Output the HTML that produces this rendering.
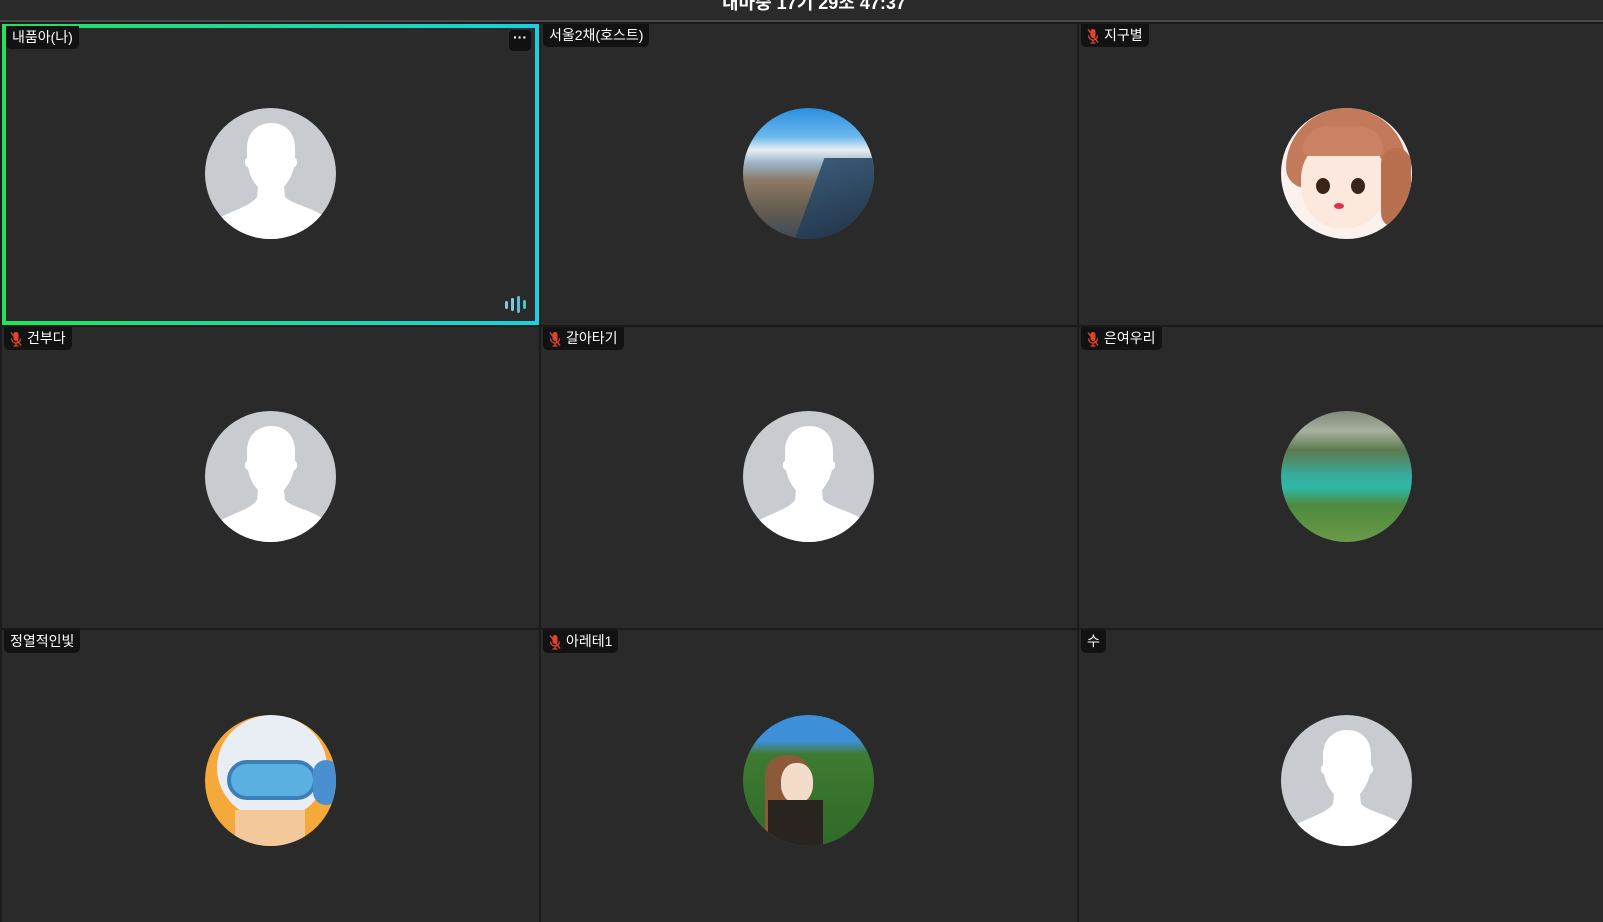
<!DOCTYPE html>
<html><head><meta charset="utf-8"><style>
*{margin:0;padding:0;box-sizing:border-box}
body{width:1603px;height:922px;background:#1b1b1b;overflow:hidden;position:relative;font-family:"Liberation Sans","Noto Sans CJK KR",sans-serif}
.hdr{position:absolute;left:0;top:0;width:1603px;height:22px;background:#2a2a2a;border-bottom:2px solid #4a4a4a;overflow:hidden}
.hdr span{position:absolute;left:722px;top:-11px;color:#fff;font-size:18px;font-weight:bold;white-space:nowrap}
.tile{position:absolute;background:#2a2a2a;overflow:hidden}
.lbl{position:absolute;left:2px;top:0;height:23px;line-height:23px;padding:0 6px 0 6px;background:#121212;color:#fff;font-size:14px;border-radius:0 0 5px 5px;white-space:nowrap;display:flex;align-items:center}
.lbl svg{margin-right:5px}
.av{position:absolute;width:131px;height:131px;border-radius:50%;left:203px;top:86px;overflow:hidden}
</style></head><body>
<div class="hdr"><span>내마중 17기 29조 47:37</span></div>

<svg width="0" height="0" style="position:absolute"><defs>
<symbol id="mic" viewBox="0 0 12 16"><rect x="3.5" y="1" width="5" height="9" rx="2.5" fill="#e0442e"/><path d="M1.5 7.5a4.5 4.5 0 0 0 9 0M6 12v3M3.5 15h5" stroke="#e0442e" stroke-width="1.3" fill="none"/><path d="M1 1.5l10 13" stroke="#e0442e" stroke-width="1.4"/></symbol>
<symbol id="person" viewBox="0 0 131 131"><rect width="131" height="131" fill="#c8cbd0"/><path d="M42 40c0-16 11-25 24-25 14 0 24 9 24 25v10c3 1 3 8-1 9-2 9-6 15-10 20l1 10c8 8 30 11 41 21 6 5 10 13 10 21H1c0-8 5-15 12-20 12-8 32-12 39-22l1-10c-5-5-8-11-10-20-4-1-4-8-1-9z" fill="#fff"/></symbol>
</defs></svg>

<!-- Row 1 -->
<div class="tile" style="left:2px;top:24px;width:537px;height:301px">
  <div class="av" style="left:203px;top:84px"><svg width="131" height="131"><use href="#person"/></svg></div>
  <div style="position:absolute;left:0;top:0;width:537px;height:301px;border:4px solid transparent;border-image:linear-gradient(90deg,#22e35a,#1ccfe0) 1"></div>
  <div class="lbl" style="left:4px;top:2px">내품아(나)</div>
  <div style="position:absolute;left:507px;top:6px;width:22px;height:21px;background:#111;border-radius:4px;color:#fff;font-size:14px;line-height:14px;text-align:center;font-weight:bold">···</div>
  <svg style="position:absolute;left:502px;top:272px" width="24" height="17"><g fill="#7fc8e0"><rect x="1" y="5" width="3" height="8" rx="1.5"/><rect x="7" y="2" width="3" height="13" rx="1.5"/><rect x="13" y="0" width="3" height="17" rx="1.5" fill="#5fb8d8"/><rect x="19" y="4" width="3" height="9" rx="1.5" fill="#4fc7b0"/></g></svg>
</div>
<div class="tile" style="left:541px;top:24px;width:536px;height:301px">
  <div class="av" style="left:202px;top:84px;background:linear-gradient(180deg,#2a8fe0 0%,#6cb8ee 22%,#e8eef2 32%,#9ab4c8 42%,#8b7a66 55%,#6a6050 75%,#3d4a58 100%)"><div style="position:absolute;left:65px;top:50px;width:80px;height:90px;background:linear-gradient(160deg,#3a5a78,#1e2f40);transform:skewX(-20deg)"></div></div>
  <div class="lbl">서울2채(호스트)</div>
</div>
<div class="tile" style="left:1079px;top:24px;width:524px;height:301px">
  <div class="av" style="left:202px;top:84px;background:#fbf2ee"><div style="position:absolute;left:5px;top:0;width:121px;height:80px;border-radius:60px 60px 20px 20px;background:#c27a5a"></div><div style="position:absolute;left:20px;top:30px;width:85px;height:90px;border-radius:45%;background:#fde8de"></div><div style="position:absolute;left:22px;top:18px;width:80px;height:30px;border-radius:40px 40px 10px 10px;background:#c98262"></div><div style="position:absolute;left:100px;top:40px;width:30px;height:80px;border-radius:15px;background:#b9704f"></div><div style="position:absolute;left:35px;top:70px;width:14px;height:16px;border-radius:50%;background:#3a2318"></div><div style="position:absolute;left:70px;top:70px;width:14px;height:16px;border-radius:50%;background:#3a2318"></div><div style="position:absolute;left:53px;top:95px;width:10px;height:6px;border-radius:50%;background:#e0304a"></div></div>
  <div class="lbl"><svg width="12" height="16"><use href="#mic"/></svg>지구별</div>
</div>

<!-- Row 2 -->
<div class="tile" style="left:2px;top:327px;width:537px;height:301px">
  <div class="av" style="left:203px;top:84px"><svg width="131" height="131"><use href="#person"/></svg></div>
  <div class="lbl"><svg width="12" height="16"><use href="#mic"/></svg>건부다</div>
</div>
<div class="tile" style="left:541px;top:327px;width:536px;height:301px">
  <div class="av" style="left:202px;top:84px"><svg width="131" height="131"><use href="#person"/></svg></div>
  <div class="lbl"><svg width="12" height="16"><use href="#mic"/></svg>갈아타기</div>
</div>
<div class="tile" style="left:1079px;top:327px;width:524px;height:301px">
  <div class="av" style="left:202px;top:84px;background:linear-gradient(180deg,#7f8a78 0%,#a8b0a0 15%,#5d7a4e 30%,#3aa89a 48%,#2fb8a8 58%,#4e8a3e 72%,#6a9a48 100%)"></div>
  <div class="lbl"><svg width="12" height="16"><use href="#mic"/></svg>은여우리</div>
</div>

<!-- Row 3 -->
<div class="tile" style="left:2px;top:630px;width:537px;height:292px">
  <div class="av" style="left:203px;top:85px;background:#f5a93a"><div style="position:absolute;left:12px;top:0;width:110px;height:105px;border-radius:50%;background:#e8eef4"></div><div style="position:absolute;left:22px;top:45px;width:90px;height:40px;border-radius:20px;background:#5ab0e0;border:4px solid #3b7fb8"></div><div style="position:absolute;left:108px;top:45px;width:26px;height:45px;border-radius:13px;background:#4a90d0"></div><div style="position:absolute;left:30px;top:95px;width:70px;height:40px;background:#f3c89a"></div></div>
  <div class="lbl">정열적인빛</div>
</div>
<div class="tile" style="left:541px;top:630px;width:536px;height:292px">
  <div class="av" style="left:202px;top:85px;background:linear-gradient(180deg,#3d8fd8 0%,#3d8fd8 20%,#3e7a30 30%,#2f6a28 100%)"><div style="position:absolute;left:22px;top:40px;width:45px;height:95px;border-radius:20px 20px 0 0;background:#8a5a3a"></div><div style="position:absolute;left:38px;top:48px;width:32px;height:40px;border-radius:45%;background:#f4dccb"></div><div style="position:absolute;left:25px;top:85px;width:55px;height:50px;background:#2a2420"></div></div>
  <div class="lbl"><svg width="12" height="16"><use href="#mic"/></svg>아레테1</div>
</div>
<div class="tile" style="left:1079px;top:630px;width:524px;height:292px">
  <div class="av" style="left:202px;top:85px"><svg width="131" height="131"><use href="#person"/></svg></div>
  <div class="lbl">수</div>
</div>
</body></html>
